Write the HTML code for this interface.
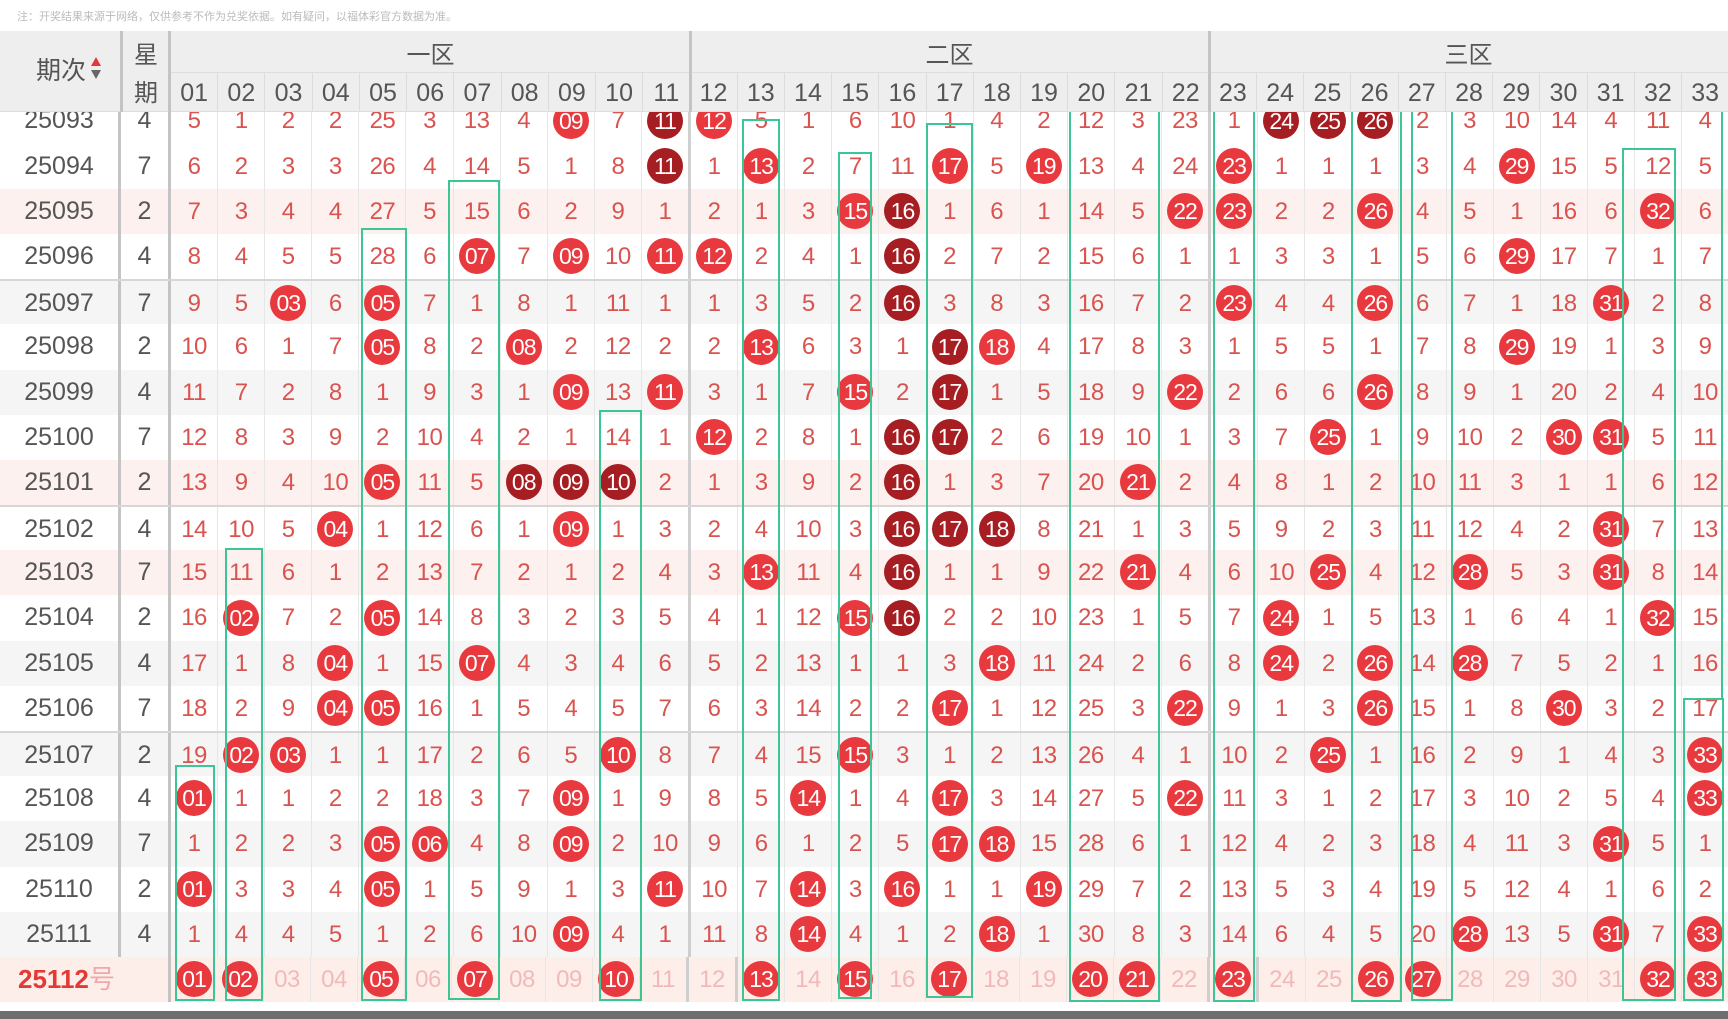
<!DOCTYPE html>
<html><head><meta charset="utf-8">
<style>
*{margin:0;padding:0;box-sizing:border-box}
body{width:1728px;height:1019px;background:#fff;position:relative;overflow:hidden;font-family:"Liberation Sans","Noto Sans CJK SC",sans-serif;color:#555}
.note{position:absolute;left:17px;top:8px;font-size:11px;color:#bbb}
.hd{position:absolute;left:0;top:31px;width:1728px;height:81px;background:#eeeeee;z-index:5;border-bottom:1px solid #ddd}
.hd .qc{position:absolute;left:36px;top:20px;font-size:25px;color:#555}
.hd .ar{position:absolute;left:90px;top:24px;width:12px}
.hd .xq{position:absolute;left:134px;font-size:24px;color:#555}
.hd .zone{position:absolute;top:4px;font-size:24px;color:#555;text-align:center}
.hd .nums{position:absolute;left:171px;top:41px;width:1557px;height:40px;display:flex;border-top:1px solid #ddd}
.hd .nums span{flex:1;text-align:center;font-size:25px;line-height:40px;color:#555;border-left:1px solid #dcdcdc}
.vl{position:absolute;background:#c4c4c4;z-index:6}
.body{position:absolute;left:0;top:112px;width:1728px;height:891px;overflow:hidden}
.tb{position:absolute;left:0;top:-13.6px;width:1728px}
.r{display:flex;height:45.2px;align-items:center;font-size:24px;color:#d9534f}
.r.g{background:#f6f5f5}
.r.k{background:#fdf1ef}
.r.sep{border-top:2px solid #d6d6d6}
.p{width:121px;text-align:center;color:#555;font-size:25px;height:100%;line-height:45px;border-right:3px solid #c4c4c4}
.w{width:50px;text-align:center;color:#555;font-size:25px;height:100%;line-height:45px;border-right:3px solid #c4c4c4}
.r i{flex:1;text-align:center;font-style:normal;height:100%;line-height:45px;border-left:1px solid #e6e6e6;letter-spacing:-0.5px}
.r i:nth-child(14),.r i:nth-child(25){border-left:3px solid #cfcfcf}
.r i:nth-child(3){border-left:none}
b{display:inline-block;width:36px;height:36px;border-radius:50%;background:#e8393e;color:#fff;line-height:36px;font-weight:normal;font-size:23px;letter-spacing:-1px;vertical-align:middle;margin-top:-3px}
b.d{background:#a61d22}
.last{background:#fdeee9;color:#f2b9b9}
.last .p{color:#e53935;font-weight:bold;font-size:26px;text-align:left;padding-left:18px;width:171px;border-right:3px solid #c4c4c4}
.last .p span{font-weight:normal;color:#f0a9a9}
.bx{position:absolute;border:2px solid #3cc695;z-index:3}
.bot{position:absolute;left:0;top:1011px;width:1728px;height:8px;background:#6e6e6e}
</style></head><body>
<div class="note">注：开奖结果来源于网络，仅供参考不作为兑奖依据。如有疑问，以福体彩官方数据为准。</div>
<div class="hd">
 <div class="qc">期次</div>
 <svg class="ar" width="12" height="26" viewBox="0 0 12 26"><path d="M6 2 L11 11 L1 11Z" fill="#e53935"/><path d="M1 15 L11 15 L6 24Z" fill="#666"/></svg>
 <div class="xq" style="top:4px">星</div><div class="xq" style="top:42px">期</div>
 <div class="zone" style="left:171px;width:519px">一区</div>
 <div class="zone" style="left:690px;width:519px">二区</div>
 <div class="zone" style="left:1209px;width:519px">三区</div>
 <div class="nums"><span style="border-left:none">01</span><span>02</span><span>03</span><span>04</span><span>05</span><span>06</span><span>07</span><span>08</span><span>09</span><span>10</span><span>11</span><span>12</span><span>13</span><span>14</span><span>15</span><span>16</span><span>17</span><span>18</span><span>19</span><span>20</span><span>21</span><span>22</span><span>23</span><span>24</span><span>25</span><span>26</span><span>27</span><span>28</span><span>29</span><span>30</span><span>31</span><span>32</span><span>33</span></div>
</div>
<div class="vl" style="left:120px;top:31px;width:3px;height:81px"></div>
<div class="vl" style="left:168px;top:31px;width:3px;height:81px"></div>
<div class="vl" style="left:689px;top:31px;width:3px;height:81px"></div>
<div class="vl" style="left:1208px;top:31px;width:3px;height:81px"></div>

<div class="body"><div class="tb">
<div class="r"><div class="p">25093</div><div class="w">4</div><i>5</i><i>1</i><i>2</i><i>2</i><i>25</i><i>3</i><i>13</i><i>4</i><i><b>09</b></i><i>7</i><i><b class="d">11</b></i><i><b>12</b></i><i>5</i><i>1</i><i>6</i><i>10</i><i>1</i><i>4</i><i>2</i><i>12</i><i>3</i><i>23</i><i>1</i><i><b class="d">24</b></i><i><b class="d">25</b></i><i><b class="d">26</b></i><i>2</i><i>3</i><i>10</i><i>14</i><i>4</i><i>11</i><i>4</i></div>
<div class="r"><div class="p">25094</div><div class="w">7</div><i>6</i><i>2</i><i>3</i><i>3</i><i>26</i><i>4</i><i>14</i><i>5</i><i>1</i><i>8</i><i><b class="d">11</b></i><i>1</i><i><b>13</b></i><i>2</i><i>7</i><i>11</i><i><b>17</b></i><i>5</i><i><b>19</b></i><i>13</i><i>4</i><i>24</i><i><b>23</b></i><i>1</i><i>1</i><i>1</i><i>3</i><i>4</i><i><b>29</b></i><i>15</i><i>5</i><i>12</i><i>5</i></div>
<div class="r k"><div class="p">25095</div><div class="w">2</div><i>7</i><i>3</i><i>4</i><i>4</i><i>27</i><i>5</i><i>15</i><i>6</i><i>2</i><i>9</i><i>1</i><i>2</i><i>1</i><i>3</i><i><b>15</b></i><i><b class="d">16</b></i><i>1</i><i>6</i><i>1</i><i>14</i><i>5</i><i><b>22</b></i><i><b>23</b></i><i>2</i><i>2</i><i><b>26</b></i><i>4</i><i>5</i><i>1</i><i>16</i><i>6</i><i><b>32</b></i><i>6</i></div>
<div class="r"><div class="p">25096</div><div class="w">4</div><i>8</i><i>4</i><i>5</i><i>5</i><i>28</i><i>6</i><i><b>07</b></i><i>7</i><i><b>09</b></i><i>10</i><i><b>11</b></i><i><b>12</b></i><i>2</i><i>4</i><i>1</i><i><b class="d">16</b></i><i>2</i><i>7</i><i>2</i><i>15</i><i>6</i><i>1</i><i>1</i><i>3</i><i>3</i><i>1</i><i>5</i><i>6</i><i><b>29</b></i><i>17</i><i>7</i><i>1</i><i>7</i></div>
<div class="r g sep"><div class="p">25097</div><div class="w">7</div><i>9</i><i>5</i><i><b>03</b></i><i>6</i><i><b>05</b></i><i>7</i><i>1</i><i>8</i><i>1</i><i>11</i><i>1</i><i>1</i><i>3</i><i>5</i><i>2</i><i><b class="d">16</b></i><i>3</i><i>8</i><i>3</i><i>16</i><i>7</i><i>2</i><i><b>23</b></i><i>4</i><i>4</i><i><b>26</b></i><i>6</i><i>7</i><i>1</i><i>18</i><i><b>31</b></i><i>2</i><i>8</i></div>
<div class="r"><div class="p">25098</div><div class="w">2</div><i>10</i><i>6</i><i>1</i><i>7</i><i><b>05</b></i><i>8</i><i>2</i><i><b>08</b></i><i>2</i><i>12</i><i>2</i><i>2</i><i><b>13</b></i><i>6</i><i>3</i><i>1</i><i><b class="d">17</b></i><i><b>18</b></i><i>4</i><i>17</i><i>8</i><i>3</i><i>1</i><i>5</i><i>5</i><i>1</i><i>7</i><i>8</i><i><b>29</b></i><i>19</i><i>1</i><i>3</i><i>9</i></div>
<div class="r g"><div class="p">25099</div><div class="w">4</div><i>11</i><i>7</i><i>2</i><i>8</i><i>1</i><i>9</i><i>3</i><i>1</i><i><b>09</b></i><i>13</i><i><b>11</b></i><i>3</i><i>1</i><i>7</i><i><b>15</b></i><i>2</i><i><b class="d">17</b></i><i>1</i><i>5</i><i>18</i><i>9</i><i><b>22</b></i><i>2</i><i>6</i><i>6</i><i><b>26</b></i><i>8</i><i>9</i><i>1</i><i>20</i><i>2</i><i>4</i><i>10</i></div>
<div class="r"><div class="p">25100</div><div class="w">7</div><i>12</i><i>8</i><i>3</i><i>9</i><i>2</i><i>10</i><i>4</i><i>2</i><i>1</i><i>14</i><i>1</i><i><b>12</b></i><i>2</i><i>8</i><i>1</i><i><b class="d">16</b></i><i><b class="d">17</b></i><i>2</i><i>6</i><i>19</i><i>10</i><i>1</i><i>3</i><i>7</i><i><b>25</b></i><i>1</i><i>9</i><i>10</i><i>2</i><i><b>30</b></i><i><b>31</b></i><i>5</i><i>11</i></div>
<div class="r k"><div class="p">25101</div><div class="w">2</div><i>13</i><i>9</i><i>4</i><i>10</i><i><b>05</b></i><i>11</i><i>5</i><i><b class="d">08</b></i><i><b class="d">09</b></i><i><b class="d">10</b></i><i>2</i><i>1</i><i>3</i><i>9</i><i>2</i><i><b class="d">16</b></i><i>1</i><i>3</i><i>7</i><i>20</i><i><b>21</b></i><i>2</i><i>4</i><i>8</i><i>1</i><i>2</i><i>10</i><i>11</i><i>3</i><i>1</i><i>1</i><i>6</i><i>12</i></div>
<div class="r sep"><div class="p">25102</div><div class="w">4</div><i>14</i><i>10</i><i>5</i><i><b>04</b></i><i>1</i><i>12</i><i>6</i><i>1</i><i><b>09</b></i><i>1</i><i>3</i><i>2</i><i>4</i><i>10</i><i>3</i><i><b class="d">16</b></i><i><b class="d">17</b></i><i><b class="d">18</b></i><i>8</i><i>21</i><i>1</i><i>3</i><i>5</i><i>9</i><i>2</i><i>3</i><i>11</i><i>12</i><i>4</i><i>2</i><i><b>31</b></i><i>7</i><i>13</i></div>
<div class="r k"><div class="p">25103</div><div class="w">7</div><i>15</i><i>11</i><i>6</i><i>1</i><i>2</i><i>13</i><i>7</i><i>2</i><i>1</i><i>2</i><i>4</i><i>3</i><i><b>13</b></i><i>11</i><i>4</i><i><b class="d">16</b></i><i>1</i><i>1</i><i>9</i><i>22</i><i><b>21</b></i><i>4</i><i>6</i><i>10</i><i><b>25</b></i><i>4</i><i>12</i><i><b>28</b></i><i>5</i><i>3</i><i><b>31</b></i><i>8</i><i>14</i></div>
<div class="r"><div class="p">25104</div><div class="w">2</div><i>16</i><i><b>02</b></i><i>7</i><i>2</i><i><b>05</b></i><i>14</i><i>8</i><i>3</i><i>2</i><i>3</i><i>5</i><i>4</i><i>1</i><i>12</i><i><b>15</b></i><i><b class="d">16</b></i><i>2</i><i>2</i><i>10</i><i>23</i><i>1</i><i>5</i><i>7</i><i><b>24</b></i><i>1</i><i>5</i><i>13</i><i>1</i><i>6</i><i>4</i><i>1</i><i><b>32</b></i><i>15</i></div>
<div class="r g"><div class="p">25105</div><div class="w">4</div><i>17</i><i>1</i><i>8</i><i><b>04</b></i><i>1</i><i>15</i><i><b>07</b></i><i>4</i><i>3</i><i>4</i><i>6</i><i>5</i><i>2</i><i>13</i><i>1</i><i>1</i><i>3</i><i><b>18</b></i><i>11</i><i>24</i><i>2</i><i>6</i><i>8</i><i><b>24</b></i><i>2</i><i><b>26</b></i><i>14</i><i><b>28</b></i><i>7</i><i>5</i><i>2</i><i>1</i><i>16</i></div>
<div class="r"><div class="p">25106</div><div class="w">7</div><i>18</i><i>2</i><i>9</i><i><b>04</b></i><i><b>05</b></i><i>16</i><i>1</i><i>5</i><i>4</i><i>5</i><i>7</i><i>6</i><i>3</i><i>14</i><i>2</i><i>2</i><i><b>17</b></i><i>1</i><i>12</i><i>25</i><i>3</i><i><b>22</b></i><i>9</i><i>1</i><i>3</i><i><b>26</b></i><i>15</i><i>1</i><i>8</i><i><b>30</b></i><i>3</i><i>2</i><i>17</i></div>
<div class="r g sep"><div class="p">25107</div><div class="w">2</div><i>19</i><i><b>02</b></i><i><b>03</b></i><i>1</i><i>1</i><i>17</i><i>2</i><i>6</i><i>5</i><i><b>10</b></i><i>8</i><i>7</i><i>4</i><i>15</i><i><b>15</b></i><i>3</i><i>1</i><i>2</i><i>13</i><i>26</i><i>4</i><i>1</i><i>10</i><i>2</i><i><b>25</b></i><i>1</i><i>16</i><i>2</i><i>9</i><i>1</i><i>4</i><i>3</i><i><b>33</b></i></div>
<div class="r"><div class="p">25108</div><div class="w">4</div><i><b>01</b></i><i>1</i><i>1</i><i>2</i><i>2</i><i>18</i><i>3</i><i>7</i><i><b>09</b></i><i>1</i><i>9</i><i>8</i><i>5</i><i><b>14</b></i><i>1</i><i>4</i><i><b>17</b></i><i>3</i><i>14</i><i>27</i><i>5</i><i><b>22</b></i><i>11</i><i>3</i><i>1</i><i>2</i><i>17</i><i>3</i><i>10</i><i>2</i><i>5</i><i>4</i><i><b>33</b></i></div>
<div class="r g"><div class="p">25109</div><div class="w">7</div><i>1</i><i>2</i><i>2</i><i>3</i><i><b>05</b></i><i><b>06</b></i><i>4</i><i>8</i><i><b>09</b></i><i>2</i><i>10</i><i>9</i><i>6</i><i>1</i><i>2</i><i>5</i><i><b>17</b></i><i><b>18</b></i><i>15</i><i>28</i><i>6</i><i>1</i><i>12</i><i>4</i><i>2</i><i>3</i><i>18</i><i>4</i><i>11</i><i>3</i><i><b>31</b></i><i>5</i><i>1</i></div>
<div class="r"><div class="p">25110</div><div class="w">2</div><i><b>01</b></i><i>3</i><i>3</i><i>4</i><i><b>05</b></i><i>1</i><i>5</i><i>9</i><i>1</i><i>3</i><i><b>11</b></i><i>10</i><i>7</i><i><b>14</b></i><i>3</i><i><b>16</b></i><i>1</i><i>1</i><i><b>19</b></i><i>29</i><i>7</i><i>2</i><i>13</i><i>5</i><i>3</i><i>4</i><i>19</i><i>5</i><i>12</i><i>4</i><i>1</i><i>6</i><i>2</i></div>
<div class="r g"><div class="p">25111</div><div class="w">4</div><i>1</i><i>4</i><i>4</i><i>5</i><i>1</i><i>2</i><i>6</i><i>10</i><i><b>09</b></i><i>4</i><i>1</i><i>11</i><i>8</i><i><b>14</b></i><i>4</i><i>1</i><i>2</i><i><b>18</b></i><i>1</i><i>30</i><i>8</i><i>3</i><i>14</i><i>6</i><i>4</i><i>5</i><i>20</i><i><b>28</b></i><i>13</i><i>5</i><i><b>31</b></i><i>7</i><i><b>33</b></i></div>
<div class="r last"><div class="p">25112<span>号</span></div><i style="border-left:none"><b>01</b></i><i><b>02</b></i><i>03</i><i>04</i><i><b>05</b></i><i>06</i><i><b>07</b></i><i>08</i><i>09</i><i><b>10</b></i><i>11</i><i style="border-left:3px solid #cfcfcf">12</i><i><b>13</b></i><i>14</i><i><b>15</b></i><i>16</i><i><b>17</b></i><i>18</i><i>19</i><i><b>20</b></i><i><b>21</b></i><i>22</i><i style="border-left:3px solid #cfcfcf"><b>23</b></i><i>24</i><i>25</i><i><b>26</b></i><i><b>27</b></i><i>28</i><i>29</i><i>30</i><i>31</i><i><b>32</b></i><i><b>33</b></i></div>
</div></div>

<div class="bx" style="left:175px;top:765px;width:40px;height:236px"></div>
<div class="bx" style="left:225px;top:548px;width:38px;height:453px"></div>
<div class="bx" style="left:361px;top:228px;width:46px;height:773px"></div>
<div class="bx" style="left:448px;top:180px;width:52px;height:820px"></div>
<div class="bx" style="left:599px;top:410px;width:43px;height:591px"></div>
<div class="bx" style="left:742px;top:119px;width:38px;height:882px"></div>
<div class="bx" style="left:838px;top:152px;width:34px;height:847px"></div>
<div class="bx" style="left:926px;top:123px;width:47px;height:875px"></div>
<div class="bx" style="left:1069px;top:100px;width:91px;height:902px"></div>
<div class="bx" style="left:1213px;top:100px;width:42px;height:902px"></div>
<div class="bx" style="left:1351px;top:100px;width:51px;height:902px"></div>
<div class="bx" style="left:1411px;top:100px;width:42px;height:901px"></div>
<div class="bx" style="left:1622px;top:148px;width:54px;height:853px"></div>
<div class="bx" style="left:1683px;top:698px;width:41px;height:303px"></div>
<div class="bx" style="left:1721px;top:100px;width:2px;height:600px;border-width:0 0 0 2px"></div>
<div class="bot"></div>
</body></html>
